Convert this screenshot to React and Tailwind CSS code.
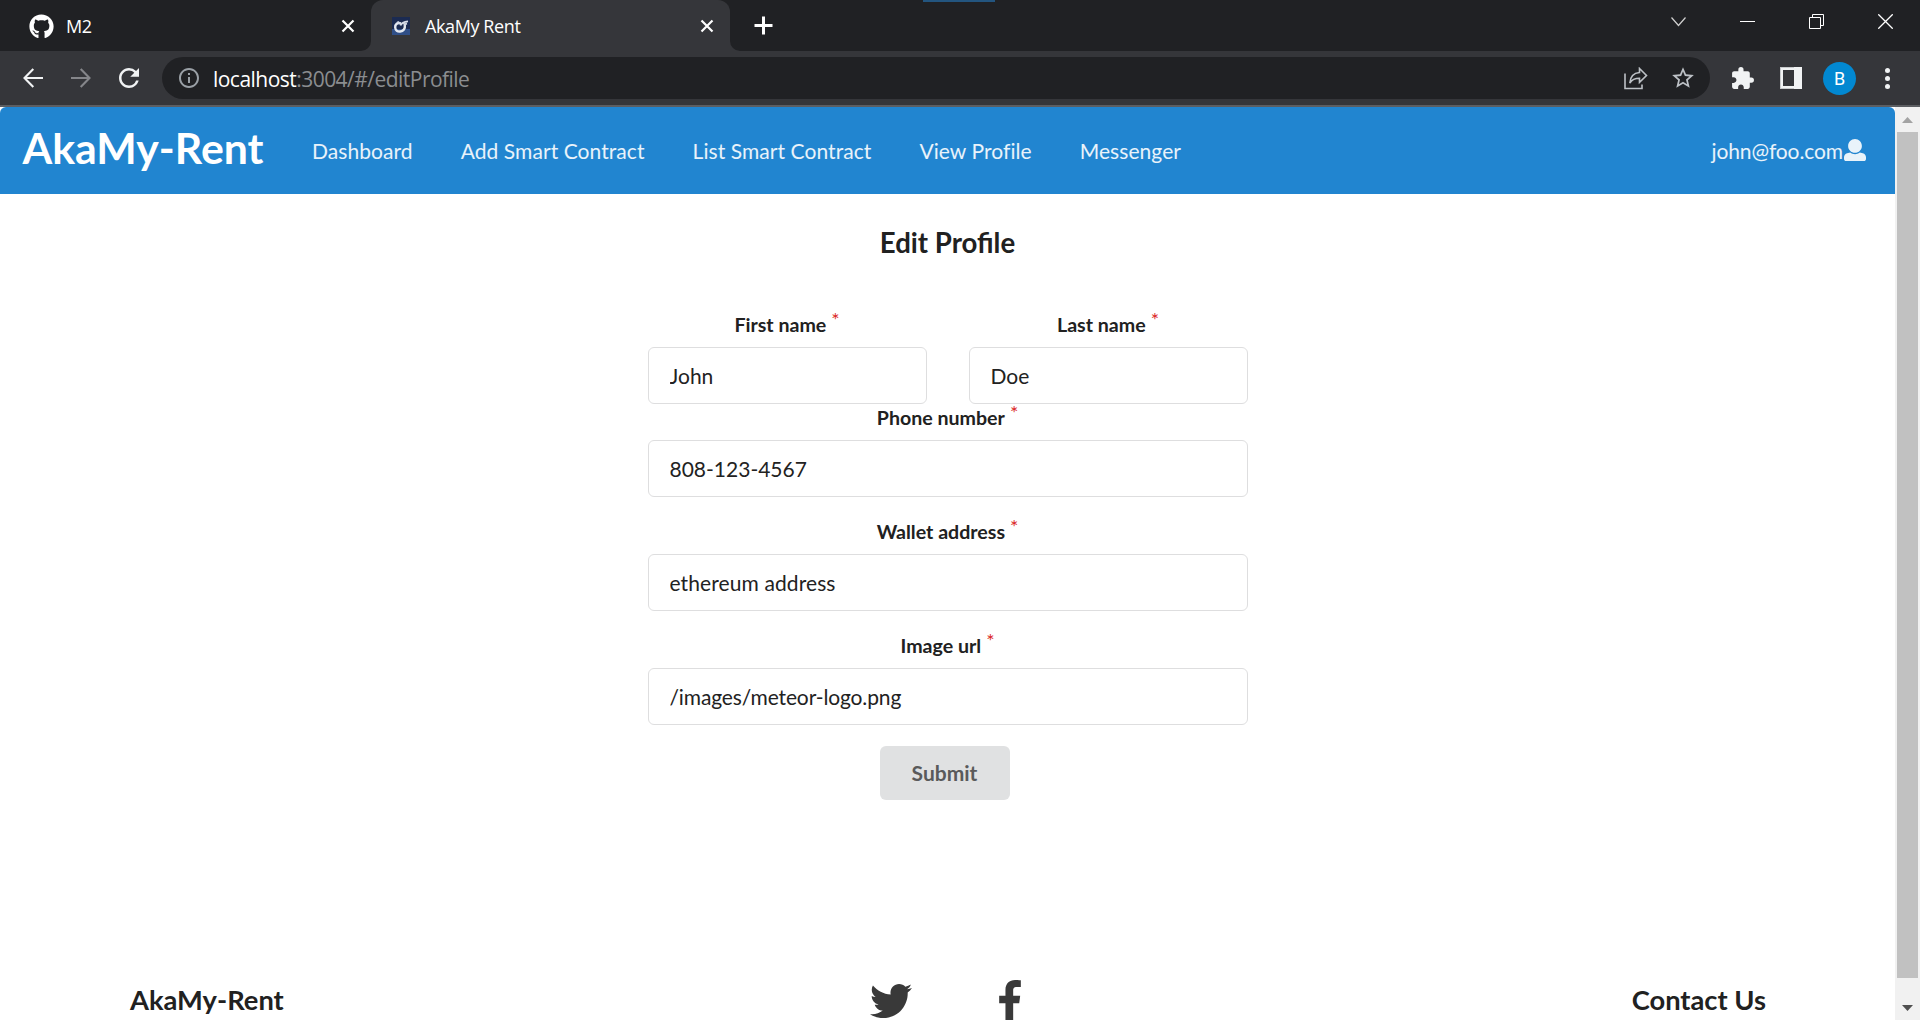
import React from "react";
import { FaTwitter, FaGithub } from "react-icons/fa";
import { MdExtension, MdInfoOutline, MdRefresh, MdStarOutline } from "react-icons/md";

const CloseIcon = ({ className }) => (
  <svg className={className} width="14" height="14" viewBox="0 0 14 14" fill="none" stroke="#fff" strokeWidth="2.2">
    <path d="M1.5 1.5l11 11M12.5 1.5l-11 11" />
  </svg>
);

function TabStrip() {
  return (
    <div className="relative flex h-[51px] bg-[#202124] text-[18px] tracking-[-0.4px] text-white">
      <div className="flex h-full w-[371px] items-center pt-[1px] pl-[29px] pr-[16px]">
        <FaGithub className="size-[25px] shrink-0" />
        <span className="ml-[12px]">M2</span>
        <CloseIcon className="ml-auto" />
      </div>
      <div className="relative flex h-full w-[359px] items-center rounded-t-[12px] bg-[#35363a] pt-[1px] pl-[21px] pr-[16px]">
        <svg className="absolute bottom-0 -left-[10px]" width="10" height="10"><path d="M10 0v10H0A10 10 0 0 0 10 0" fill="#35363a" /></svg>
        <svg className="absolute bottom-0 -right-[10px]" width="10" height="10"><path d="M0 0v10h10A10 10 0 0 1 0 0" fill="#35363a" /></svg>
        <svg className="shrink-0" width="18" height="18" viewBox="0 0 18 18" fill="none">
          <path fill="#1b2b52" d="M0 0h18v18H0z" />
          <path fill="#304f87" d="M0 12h18v6H0z" />
          <path stroke="#e3e8f0" strokeWidth="2.4" d="M9 6.500C5.500 5 3 7.400 3.200 10.500c.2 3 2.400 4.300 5 4 3.200-.3 5.200-3 4.600-6.500" />
          <path stroke="#d5dbe8" strokeWidth="1.800" d="M5.500 4.500c.6 1.200 1.800 2 3.500 2.300M8.500 8.500C9.500 6 12 4.800 16 4.300M11.500 7.500l3.500-.8" />
        </svg>
        <span className="ml-[15px] whitespace-nowrap">AkaMy Rent</span>
        <CloseIcon className="ml-auto" />
      </div>
      <svg className="ml-[24px] mt-[16px]" width="19" height="19" viewBox="0 0 19 19" stroke="#fff" strokeWidth="3"><path d="M9.500 .5v18M.5 9.500h18" /></svg>
      <div className="absolute top-0 left-[923px] h-[2px] w-[72px] bg-[#23557f]" />
      <div className="mt-[14px] ml-auto mr-[27px] flex gap-[54px]">
        <svg width="15" height="15" viewBox="0 0 15 15" fill="none" stroke="#d0d0d0" strokeWidth="1.200"><path d="M.5 3.500l7 8 7-8" /></svg>
        <svg width="15" height="15" viewBox="0 0 15 15" fill="#fff"><path d="M0 7h15v1H0z" /></svg>
        <svg width="15" height="15" viewBox="0 0 15 15" fill="none" stroke="#fff"><path d="M.5 3.500h11v11H.5zM3.500 3.500v-3h11v11h-3" /></svg>
        <svg width="15" height="15" viewBox="0 0 15 15" fill="none" stroke="#fff" strokeWidth="1.300"><path d="M.3.3l14.400 14.400M14.700.3L.3 14.700" /></svg>
      </div>
    </div>
  );
}

function Toolbar() {
  return (
    <div className="flex h-[56px] items-center border-b-2 border-[#5c5e62] bg-[#35363a] text-white">
      <svg className="ml-[23px]" width="20" height="20" viewBox="0 0 20 20" fill="none" stroke="#f1f3f4" strokeWidth="2.100"><path d="M20 10H1.800M10.300 .9L1.500 10l8.800 9.100" /></svg>
      <svg className="ml-[28px]" width="20" height="20" viewBox="0 0 20 20" fill="none" stroke="#85868a" strokeWidth="2.100"><path d="M0 10h18.200M9.700 .9l8.800 9.100-8.800 9.100" /></svg>
      <MdRefresh className="ml-[23px] size-[30px] text-[#f1f3f4]" />
      <div className="ml-[18px] flex h-[42px] w-[1548px] items-center rounded-full bg-[#202124] pl-[15px] pr-[14px]">
        <MdInfoOutline className="size-[24px] text-[#9aa0a6]" />
        <div className="ml-[12px] pt-[1px] text-[21px] leading-[28px] tracking-[-0.530px] whitespace-nowrap">
          <span>localhost</span><span className="text-[#8b8d90]">:3004/#/editProfile</span>
        </div>
        <svg className="ml-auto" width="24" height="23" viewBox="0 0 24 23" fill="none" stroke="#bdc1c6" strokeWidth="1.600">
          <path d="M1 6.500v15h17v-4" />
          <path strokeLinejoin="miter" d="M15.500 1.500l7 7-7 6.800v-4C10.500 11.300 8 12.500 5.800 16 6.300 10 9.500 6 15.500 5.500z" />
        </svg>
        <MdStarOutline className="ml-[22px] size-[26px] text-[#bdc1c6]" />
      </div>
      <MdExtension className="ml-[20px] size-[25px] text-[#f1f3f4]" />
      <svg className="ml-[25px]" width="22" height="22" viewBox="0 0 22 22"><path fill="#c8cacc" d="M0 0h14v22H0z" /><path fill="#f1f3f4" d="M14 0h8v22h-8zM1 1h13v2H3v16h11v2H1z" /><path fill="#35363a" d="M3 3h11v16H3z" /></svg>
      <div className="ml-[21px] flex size-[33px] items-center justify-center rounded-full bg-[#0288d1] font-['Roboto',sans-serif] text-[18px]">B</div>
      <div className="ml-[29px] flex flex-col gap-[3px]">
        <i className="size-[5px] rounded-full bg-[#f1f3f4]" /><i className="size-[5px] rounded-full bg-[#f1f3f4]" /><i className="size-[5px] rounded-full bg-[#f1f3f4]" />
      </div>
    </div>
  );
}

const LINKS = ["Dashboard", "Add Smart Contract", "List Smart Contract", "View Profile", "Messenger"];

function NavBar() {
  return (
    <nav className="flex h-[87px] items-center rounded-t-[6px] bg-[#2185d0] pl-[22.500px] text-[21px] text-white/90">
      <h1 className="-mt-[4px] w-[241.500px] text-[42.800px] leading-none font-bold whitespace-nowrap text-white">AkaMy-Rent</h1>
      <div className="ml-[48px] flex gap-[48px] tracking-[0.070px]">
        {LINKS.map((link) => <a key={link} className="whitespace-nowrap">{link}</a>)}
      </div>
      <a className="ml-auto mr-[29px] flex items-center">
        <span className="tracking-[-0.100px]">john@foo.com</span>
        <svg className="mb-[1px] ml-[1px] size-[22px]" viewBox="0 0 512 512" fill="currentColor">
          <path d="M256 0c88.366 0 160 71.634 160 160s-71.634 160-160 160S96 248.366 96 160 167.634 0 256 0zm183.283 333.821l-71.313-17.828c-74.923 53.890-165.738 41.864-223.940 0l-71.313 17.828C29.981 344.505 0 382.903 0 426.955V464c0 26.510 21.490 48 48 48h416c26.510 0 48-21.490 48-48v-37.045c0-44.052-29.981-82.450-72.717-93.134z" />
        </svg>
      </a>
    </nav>
  );
}

function Field({ label, value, className = "", inputClassName = "" }) {
  return (
    <label className={`block ${className}`}>
      <span className="mb-[8px] flex h-[28px] justify-center text-[19.600px] leading-[28px] font-bold">
        {label}<span className="-mt-[5px] ml-[5px] font-normal text-[#db2828]">*</span>
      </span>
      <input readOnly value={value} className={`block h-[57px] w-full rounded-[6px] border border-[#dededf] bg-white px-[21px] text-[21px] text-[#222] outline-none ${inputClassName}`} />
    </label>
  );
}

function Scrollbar() {
  return (
    <div className="flex w-[25px] shrink-0 flex-col items-center bg-[#f1f1f1]">
      <svg className="mt-[10px] mb-[9px] h-[6px] w-[11px]" viewBox="0 0 11 6"><path fill="#a3a3a3" d="M0 6L5.500 0 11 6z" /></svg>
      <div className="h-[846px] w-[21px] bg-[#c1c1c1]" />
      <svg className="mt-[27px] h-[6px] w-[11px]" viewBox="0 0 11 6"><path fill="#505050" d="M0 0h11L5.500 6z" /></svg>
    </div>
  );
}

export default function App() {
  return (
    <div className="flex h-[1020px] w-[1920px] flex-col overflow-hidden bg-white font-['Open_Sans',sans-serif]">
      <TabStrip />
      <Toolbar />
      <div className="flex h-[913px]">
        <main className="flex w-[1895px] flex-col font-['Lato',sans-serif] text-[#212121]">
          <NavBar />
          <div className="mx-auto w-[600px] pt-[32px]">
            <h2 className="text-center text-[27.600px] leading-[34px] font-bold">Edit Profile</h2>
            <div className="mt-[51px] flex gap-[42px]">
              <Field className="flex-1" label="First name" value="John" />
              <Field className="flex-1" label="Last name" value="Doe" />
            </div>
            <div className="flex flex-col gap-[21px]">
              <Field label="Phone number" value="808-123-4567" />
              <Field label="Wallet address" value="ethereum address" inputClassName="tracking-[0.100px]" />
              <Field label="Image url" value="/images/meteor-logo.png" inputClassName="tracking-[-0.130px]" />
            </div>
            <button className="mt-[21px] ml-[232px] h-[54px] w-[130px] rounded-[6px] bg-[#e0e1e2] text-[21px] font-bold text-[#5a5a5b]">Submit</button>
          </div>
          <footer className="mt-[180px] flex h-[40px] items-start overflow-hidden text-[27.300px] leading-[34px] font-bold">
            <h3 className="ml-[130px] mt-[3px] w-[740px]">AkaMy-Rent</h3>
            <FaTwitter className="size-[42px] shrink-0 text-[#393939]" />
            <svg className="ml-[87px] h-[42px] w-[22px] shrink-0" viewBox="0 0 264 512" fill="#393939">
              <path d="M76.700 512V283H0v-91h76.700v-71.700C76.700 42.400 124.300 0 193.800 0c33.300 0 61.900 2.500 70.200 3.600V85h-48.200c-37.800 0-45.100 18-45.100 44.300V192H256l-11.700 91h-73.600v229" />
            </svg>
            <h3 className="ml-auto mt-[3px] mr-[129px]">Contact Us</h3>
          </footer>
        </main>
        <Scrollbar />
      </div>
    </div>
  );
}
